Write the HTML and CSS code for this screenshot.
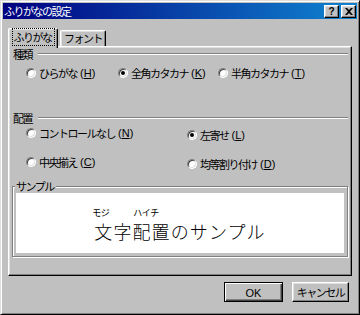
FILE: index.html
```html
<!DOCTYPE html>
<html lang="ja">
<head>
  <meta charset="UTF-8">
  <title>ふりがなの設定</title>
  <link rel="stylesheet" href="styles.css">
</head>
<body>
  <div class="dialog">
    <div class="titlebar">
      <span class="title">ふりがなの設定</span>
      <div class="title-btns">
        <span class="tbtn help">?</span>
        <span class="tbtn close">
          <svg width="8" height="7" viewBox="0 0 8 7"><path d="M0 0h2l2 2 2-2h2L5 3.5 8 7H6L4 5 2 7H0l3-3.5z" fill="#000"/></svg>
        </span>
      </div>
    </div>

    <div class="content">
      <div class="tabs">
        <div class="tab active"><span class="focus">ふりがな</span></div>
        <div class="tab">フォント</div>
      </div>

      <div class="panel">
        <div class="section-head"><span>種類</span><i class="etch"></i></div>
        <div class="kind-row">
          <label class="radio-item"><span class="radio"></span>ひらがな<span class="key">(<u>H</u>)</span></label>
          <label class="radio-item"><span class="radio checked"></span>全角カタカナ<span class="key">(<u>K</u>)</span></label>
          <label class="radio-item"><span class="radio"></span>半角カタカナ<span class="key">(<u>T</u>)</span></label>
        </div>

        <div class="section-head head-align"><span>配置</span><i class="etch"></i></div>
        <div class="align-grid">
          <div class="align-col">
            <label class="radio-item"><span class="radio"></span>コントロールなし<span class="key">(<u>N</u>)</span></label>
            <label class="radio-item"><span class="radio"></span>中央揃え<span class="key">(<u>C</u>)</span></label>
          </div>
          <div class="align-col right">
            <label class="radio-item"><span class="radio checked"></span>左寄せ<span class="key">(<u>L</u>)</span></label>
            <label class="radio-item"><span class="radio"></span>均等割り付け<span class="key">(<u>D</u>)</span></label>
          </div>
        </div>

        <fieldset class="sample">
          <legend>サンプル</legend>
          <div class="sample-box">
            <div class="sample-text">
              <div class="ruby"><span class="r1">モジ</span><span class="r2">ハイチ</span></div>
              <div class="base">文字配置のサンプル</div>
            </div>
          </div>
        </fieldset>
      </div>

      <div class="buttons">
        <button class="btn default"><span class="key">OK</span></button>
        <button class="btn">キャンセル</button>
      </div>
    </div>
  </div>
</body>
</html>
```

FILE: styles.css
```css
* {
  box-sizing: border-box;
}

body {
  margin: 0;
  font-family: "Noto Sans CJK JP", "Noto Sans", sans-serif;
  font-size: 11px;
  letter-spacing: -1.5px;
  color: #000;
}

.key {
  font-family: "Liberation Sans", "Noto Sans", sans-serif;
  letter-spacing: 0;
}

.dialog {
  width: 360px;
  height: 315px;
  background: #c0c0c0;
  border: 1px solid;
  border-color: #dfdfdf #000 #000 #dfdfdf;
  box-shadow: inset 1px 1px #fff, inset -1px -1px #808080;
  padding: 2px;
  display: flex;
  flex-direction: column;
}

.titlebar {
  height: 16px;
  background: linear-gradient(to right, #000080, #1084d0);
  color: #fff;
  display: flex;
  align-items: center;
  justify-content: space-between;
  padding: 0 1px 0 1px;
}

.title {
  font-size: 11px;
  line-height: 16px;
}

.title-btns {
  display: flex;
  gap: 2px;
}

.tbtn {
  width: 15px;
  height: 13px;
  background: #c0c0c0;
  border: 1px solid;
  border-color: #fff #000 #000 #fff;
  box-shadow: inset -1px -1px #808080, inset 1px 1px #dfdfdf;
  display: flex;
  align-items: center;
  justify-content: center;
  color: #000;
}

.help {
  font-family: "Liberation Sans", sans-serif;
  font-weight: bold;
  font-size: 10px;
  line-height: 11px;
  letter-spacing: 0;
}

.content {
  flex: 1;
  display: flex;
  flex-direction: column;
  padding: 9px 5px 0 5px;
}

.tabs {
  height: 18px;
  display: flex;
  align-items: flex-end;
}

.tab {
  height: 16px;
  width: 46px;
  margin-left: 2px;
  padding-top: 1px;
  text-align: center;
  line-height: 13px;
  background: #c0c0c0;
  border: 1px solid;
  border-bottom: none;
  border-color: #fff #000 #000 #fff;
  border-radius: 2px 2px 0 0;
  box-shadow: inset -1px 0 #808080, inset 1px 1px #dfdfdf;
}

.tab.active {
  height: 20px;
  width: 50px;
  margin-left: 0;
  margin-bottom: -2px;
  padding-top: 2px;
  position: relative;
  z-index: 1;
}

.focus {
  outline: 1px dotted #000;
  padding: 0 2px 0 1px;
}

.panel {
  height: 230px;
  border: 1px solid;
  border-color: #fff #000 #000 #fff;
  box-shadow: inset -1px -1px #808080, inset 1px 1px #dfdfdf;
  padding: 1px 3px 0 4px;
  display: flex;
  flex-direction: column;
}

.section-head {
  display: flex;
  align-items: center;
  height: 10px;
  line-height: 10px;
  margin-top: 1px;
}

.etch {
  flex: 1;
  height: 2px;
  margin-left: 6px;
  border-top: 1px solid #808080;
  border-bottom: 1px solid #fff;
}

.kind-row {
  display: flex;
  margin-top: 8px;
  padding-left: 13px;
}

.kind-row .radio-item:nth-child(1) { width: 92px; }
.kind-row .radio-item:nth-child(2) { width: 100px; }

.radio-item {
  display: flex;
  align-items: center;
  gap: 3px;
  height: 12px;
  line-height: 12px;
  white-space: nowrap;
}

.radio {
  width: 10px;
  height: 10px;
  border-radius: 50%;
  background: #fff;
  border: 1px solid;
  border-color: #808080 #fff #fff #808080;
  box-shadow: inset 1px 1px #404040, inset -1px -1px #dfdfdf;
  display: flex;
  align-items: center;
  justify-content: center;
  flex: none;
}

.radio.checked::after {
  content: "";
  width: 4px;
  height: 4px;
  border-radius: 50%;
  background: #000;
}

.head-align {
  margin-top: 34px;
}

.align-grid {
  display: flex;
  margin-top: 4px;
  padding-left: 13px;
}

.align-col {
  display: flex;
  flex-direction: column;
  gap: 17px;
  width: 192px;
}

.align-col.right {
  padding-top: 2px;
}

.sample {
  margin: 11px 0 0 -1px;
  padding: 1px 3px 3px 3px;
  border: 1px solid #808080;
  box-shadow: inset 1px 1px #fff, 1px 1px #fff;
  min-width: 0;
}

.sample legend {
  padding: 0 2px 0 1px;
  line-height: 11px;
  background: #c0c0c0;
  margin-left: -1px;
}

.sample-box {
  height: 60px;
  background: #fff;
  text-align: center;
  padding-top: 15px;
}

.sample-text {
  display: inline-block;
  text-align: left;
}

.ruby {
  font-size: 9px;
  line-height: 10px;
  letter-spacing: -0.5px;
  margin-left: -2px;
}

.r2 {
  margin-left: 24px;
}

.base {
  font-size: 18px;
  font-weight: 300;
  line-height: 20px;
  letter-spacing: 1.1px;
  margin-top: 3px;
}

.buttons {
  display: flex;
  justify-content: flex-end;
  gap: 9px;
  margin-top: 6px;
  padding-right: 3px;
}

.btn {
  width: 57px;
  height: 20px;
  padding: 0;
  font-family: inherit;
  font-size: 11px;
  letter-spacing: -1.5px;
  color: #000;
  background: #c0c0c0;
  border: 1px solid;
  border-color: #fff #000 #000 #fff;
  box-shadow: inset -1px -1px #808080, inset 1px 1px #dfdfdf;
}

.btn.default {
  width: 59px;
  border-color: #000;
  box-shadow: inset 1px 1px #fff, inset -1px -1px #404040, inset -2px -2px #808080;
}
```
